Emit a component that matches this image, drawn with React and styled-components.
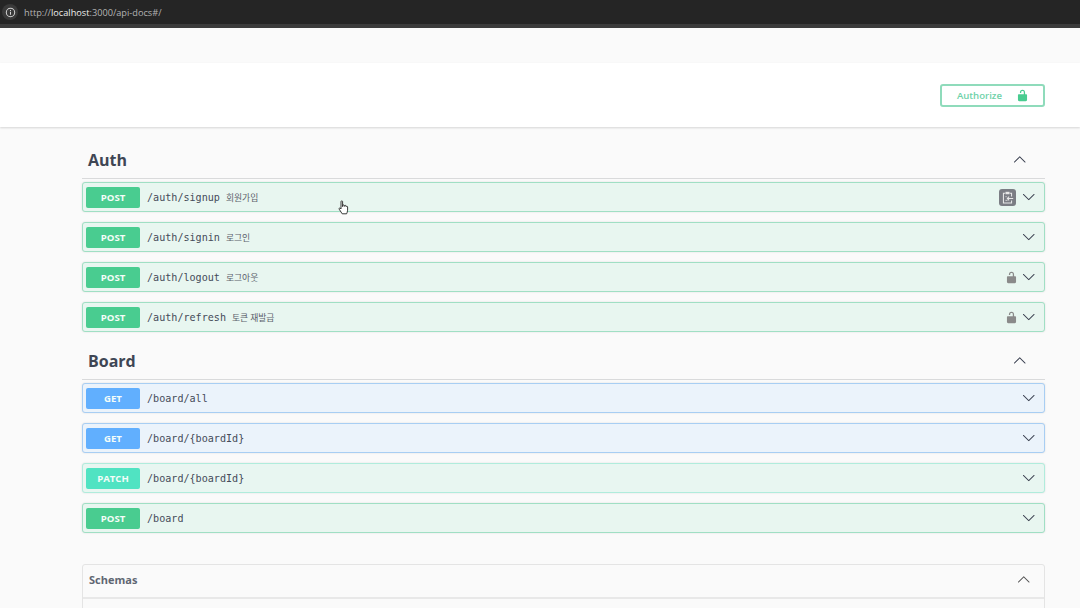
import React from 'react'
import styled, { createGlobalStyle } from 'styled-components'

const Global = createGlobalStyle`
  html, body { margin: 0; padding: 0; height: 608px; overflow: hidden; background: #fafafa; }
  * { box-sizing: border-box; }
`

const Page = styled.div`
  position: relative;
  width: 1080px;
  height: 608px;
  overflow: hidden;
  background: #fafafa;
  font-family: "Open Sans", "Noto Sans", sans-serif;
`

const BrowserBar = styled.div`
  height: 28px;
  background: #252525;
  border-bottom: 4px solid #3b3b3b;
  display: flex;
  align-items: center;
  padding-left: 2px;
  gap: 6px;
`

const InfoChip = styled.div`
  width: 16px;
  height: 16px;
  border-radius: 50%;
  background: #3a3a3a;
  display: flex;
  align-items: center;
  justify-content: center;
`

const Url = styled.span`
  font-family: "Open Sans", sans-serif;
  font-size: 9.2px;
  color: #b4b4b4;
  b { font-weight: 400; color: #eee; }
`

const Spacer = styled.div`
  height: 35px;
`

const TopPanel = styled.div`
  height: 64px;
  background: #fff;
  box-shadow: 0 1px 2px rgba(0, 0, 0, 0.15);
  display: flex;
  justify-content: flex-end;
  align-items: flex-start;
  padding: 21px 35px 0 0;
`

const AuthorizeButton = styled.button`
  width: 105px;
  height: 23px;
  background: #fff;
  border: 2px solid #8fdbbb;
  border-radius: 3px;
  display: flex;
  align-items: center;
  justify-content: flex-end;
  gap: 14px;
  padding: 0 14px 0 0;
  font-family: "Open Sans", sans-serif;
  font-weight: 600;
  font-size: 9.6px;
  color: #6fd2a9;
`

const Content = styled.div`
  width: 963px;
  margin-left: 82px;
`

const Section = styled.section`
  margin-top: ${p => p.$top}px;
`

const SectionHead = styled.div`
  display: flex;
  align-items: center;
  justify-content: space-between;
  height: 37px;
  padding: 0 19px 0 6px;
  border-bottom: 1px solid #d9dadb;
  margin-bottom: 3px;
`

const SectionTitle = styled.h3`
  margin: 0;
  font-size: 16px;
  font-weight: 700;
  color: #3f4654;
`

const Rows = styled.div`
  display: flex;
  flex-direction: column;
  gap: 10px;
`

const Row = styled.div`
  height: 30px;
  display: flex;
  align-items: center;
  padding: 0 9px 0 3px;
  border-radius: 3px;
  border: 1px solid ${p => p.$border};
  background: ${p => p.$bg};
  box-shadow: 0 0 2px rgba(0, 0, 0, 0.12);
`

const Badge = styled.span`
  width: 54px;
  height: 21px;
  flex: none;
  border-radius: 2px;
  background: ${p => p.$color};
  color: #f4fdf9;
  font-weight: 700;
  font-size: 9.6px;
  display: flex;
  align-items: center;
  justify-content: center;
`

const Path = styled.span`
  margin-left: 7px;
  padding-top: 1px;
  font-family: "DejaVu Sans Mono", monospace;
  font-size: 10.1px;
  color: #454b59;
`

const Summary = styled.span`
  margin-left: 6px;
  font-family: "Noto Sans CJK KR", sans-serif;
  font-size: 8.8px;
  color: #5c616c;
`

const RowIcons = styled.div`
  margin-left: auto;
  display: flex;
  align-items: center;
  gap: 4px;
`

const CopyChip = styled.div`
  width: 17px;
  height: 17px;
  margin-right: 2px;
  border-radius: 3px;
  background: #7b7d84;
  display: flex;
  align-items: center;
  justify-content: center;
`

const SchemasBox = styled.div`
  margin-top: 31px;
  height: 60px;
  border: 1px solid #e4e4e4;
  border-radius: 3px 3px 0 0;
`

const SchemasHead = styled.div`
  height: 34px;
  padding: 0 14px 3px 6px;
  border-bottom: 2px solid #e8e8e8;
  display: flex;
  align-items: center;
  justify-content: space-between;
`

const SchemasTitle = styled.span`
  font-size: 11px;
  font-weight: 700;
  color: #5f6672;
`

const Cursor = styled.svg`
  position: absolute;
  left: 338px;
  top: 200px;
`

const LOCK = 'M15.8 8H14V5.6C14 2.703 12.665 1 10 1 7.334 1 6 2.703 6 5.6V6h2v-.801C8 3.754 8.797 3 10 3c1.203 0 2 .754 2 2.199V8H4c-.553 0-1 .646-1 1.199V17c0 .549.428 1.139.951 1.307l1.197.387C5.672 18.861 6.55 19 7.1 19h5.8c.549 0 1.428-.139 1.951-.307l1.196-.387c.524-.167.953-.757.953-1.306V9.199C17 8.646 16.352 8 15.8 8z'
const ARROW = 'M17.418 6.109c.272-.268.709-.268.979 0s.271.701 0 .969l-7.908 7.83c-.27.268-.707.268-.979 0l-7.908-7.83c-.27-.268-.27-.701 0-.969.271-.268.709-.268.979 0L10 13.25l7.418-7.141z'

const Lock = ({ color, size = 14 }) => (
  <svg width={size} height={size} viewBox="0 0 20 20" fill={color}><path d={LOCK} /></svg>
)

const Chevron = ({ up, size = 13.5, color = '#3b4151' }) => (
  <svg width={size} height={size} viewBox="0 0 20 20" fill={color}
    style={up ? { transform: 'rotate(180deg)' } : undefined}>
    <path d={ARROW} />
  </svg>
)

const ClipboardIcon = () => (
  <svg width="13" height="13" viewBox="0 0 16 16" fill="none" stroke="#e8e8e8" strokeWidth="1.3">
    <rect x="5.5" y="1" width="5" height="3" fill="#e8e8e8" stroke="none" />
    <path d="M5 2.8H3v12h10v-3M11 2.8h2v4" />
    <path d="M15 9.2H8M10 7l-2.2 2.2L10 11.4" />
    <path d="M5.5 7H7M5.5 11.5H8" strokeWidth="1" />
  </svg>
)

const methods = {
  POST: { color: '#49cc90', bg: '#e8f6f0', border: '#a0dfc4' },
  GET: { color: '#61affe', bg: '#ebf3fb', border: '#a8cef3' },
  PATCH: { color: '#50e3c2', bg: '#e8f6f1', border: '#b0ecdc' },
}

const auth = [
  { method: 'POST', path: '/auth/signup', summary: '회원가입', copy: true },
  { method: 'POST', path: '/auth/signin', summary: '로그인' },
  { method: 'POST', path: '/auth/logout', summary: '로그아웃', lock: true },
  { method: 'POST', path: '/auth/refresh', summary: '토큰 재발급', lock: true },
]

const board = [
  { method: 'GET', path: '/board/all' },
  { method: 'GET', path: '/board/{boardId}' },
  { method: 'PATCH', path: '/board/{boardId}' },
  { method: 'POST', path: '/board' },
]

const Operation = ({ method, path, summary, lock, copy }) => {
  const m = methods[method]
  return (
    <Row $bg={m.bg} $border={m.border}>
      <Badge $color={m.color}>{method}</Badge>
      <Path>{path}</Path>
      {summary && <Summary>{summary}</Summary>}
      <RowIcons>
        {copy && <CopyChip><ClipboardIcon /></CopyChip>}
        {lock && <Lock color="#8a8a8a" size={13} />}
        <Chevron />
      </RowIcons>
    </Row>
  )
}

const Tag = ({ title, top, items }) => (
  <Section $top={top}>
    <SectionHead>
      <SectionTitle>{title}</SectionTitle>
      <Chevron up />
    </SectionHead>
    <Rows>
      {items.map((it, i) => <Operation key={i} {...it} />)}
    </Rows>
  </Section>
)

export default function App() {
  return (
    <Page>
      <Global />
      <BrowserBar>
        <InfoChip>
          <svg width="11" height="11" viewBox="0 0 12 12" fill="none" stroke="#d5d5d5" strokeWidth="1.1">
            <circle cx="6" cy="6" r="4.6" />
            <path d="M6 5.2v3.2M6 3.4v1" />
          </svg>
        </InfoChip>
        <Url>http://<b>localhost</b>:3000/api-docs#/</Url>
      </BrowserBar>
      <Spacer />
      <TopPanel>
        <AuthorizeButton>
          Authorize
          <Lock color="#49cc90" size={13} />
        </AuthorizeButton>
      </TopPanel>
      <Content>
        <Tag title="Auth" top={15} items={auth} />
        <Tag title="Board" top={11} items={board} />
        <SchemasBox>
          <SchemasHead>
            <SchemasTitle>Schemas</SchemasTitle>
            <Chevron up color="#555" />
          </SchemasHead>
        </SchemasBox>
      </Content>
      <Cursor width="12" height="16" viewBox="0 0 12 16" fill="#fff" stroke="#222" strokeWidth="0.9">
        <path d="M3 1.6c0-1 1.6-1 1.6 0v5l.2-1.2c.2-.8 1.4-.7 1.5.1l.1.9.2-.6c.3-.7 1.3-.5 1.4.2l.1.7.3-.3c.4-.4 1.2-.1 1.2.6v3.2c0 1.6-.7 2.6-1 3.6H4.2L1.2 9.2c-.5-.8.4-1.6 1.1-1L3 9z" />
      </Cursor>
    </Page>
  )
}
